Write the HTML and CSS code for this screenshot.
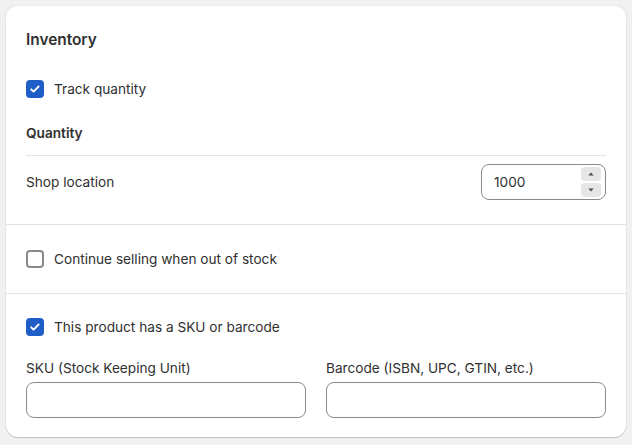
FILE: index.html
```html
<!DOCTYPE html>
<html>
<head>
<meta charset="utf-8">
<link rel="stylesheet" href="styles.css">
</head>
<body>
<div class="card">
  <section class="sec sec-top">
    <h2 class="title">Inventory</h2>
    <label class="check-row row-track">
      <span class="box checked"><svg viewBox="0 0 18 18" width="18" height="18"><path d="M5.2 9.3l2.4 2.4 5-5.2" fill="none" stroke="#fff" stroke-width="1.9" stroke-linecap="round" stroke-linejoin="round"/></svg></span>
      <span>Track quantity</span>
    </label>
    <h3 class="subtitle">Quantity</h3>
    <div class="divider"></div>
    <div class="qty-row">
      <span>Shop location</span>
      <div class="num-input">
        <span class="num-val">1000</span>
        <div class="spin">
          <span class="spin-btn"><svg viewBox="0 0 8 5" width="6" height="4"><path d="M4 0.5L7.5 4.5H0.5Z" fill="#4a4a4a"/></svg></span>
          <span class="spin-btn"><svg viewBox="0 0 8 5" width="6" height="4"><path d="M4 4.5L0.5 0.5H7.5Z" fill="#4a4a4a"/></svg></span>
        </div>
      </div>
    </div>
  </section>
  <section class="sec sec-mid">
    <label class="check-row">
      <span class="box"></span>
      <span>Continue selling when out of stock</span>
    </label>
  </section>
  <section class="sec sec-bot">
    <label class="check-row">
      <span class="box checked"><svg viewBox="0 0 18 18" width="18" height="18"><path d="M5.2 9.3l2.4 2.4 5-5.2" fill="none" stroke="#fff" stroke-width="1.9" stroke-linecap="round" stroke-linejoin="round"/></svg></span>
      <span>This product has a SKU or barcode</span>
    </label>
    <div class="fields">
      <div class="field">
        <div class="flabel">SKU (Stock Keeping Unit)</div>
        <div class="text-input"></div>
      </div>
      <div class="field">
        <div class="flabel">Barcode (ISBN, UPC, GTIN, etc.)</div>
        <div class="text-input"></div>
      </div>
    </div>
  </section>
</div>
</body>
</html>
```
FILE: styles.css
```css
* { box-sizing: border-box; }
html, body { margin: 0; padding: 0; }
body {
  background: #f1f1f1;
  padding: 6px;
  font-family: Inter, "Noto Sans", sans-serif;
  font-size: 13.65px;
  line-height: 20px;
  color: #303030;
}
.card {
  width: 620px;
  background: #fff;
  border-radius: 12px;
  box-shadow: 0 1px 0 rgba(26,26,26,0.07), 0 1px 1px rgba(0,0,0,0.12), 0 0 0 1px rgba(0,0,0,0.03);
  overflow: hidden;
}
.sec { padding: 0 20px; }
.sec + .sec { border-top: 1px solid #e3e3e3; }
.sec-top { padding-top: 24px; padding-bottom: 24px; }
.sec-mid { padding-top: 24px; padding-bottom: 24px; }
.sec-bot { padding-top: 23px; padding-bottom: 19px; }
.title {
  margin: 0;
  font-size: 15.4px;
  font-weight: 600;
  line-height: 20px;
}
.check-row {
  display: flex;
  align-items: center;
  gap: 10px;
  height: 20px;
}
.row-track { margin-top: 29px; }
.box {
  width: 18px;
  height: 18px;
  border: 2px solid #8a8a8a;
  border-radius: 4px;
  display: flex;
  align-items: center;
  justify-content: center;
  flex: none;
}
.box.checked {
  background: #1f5dc7;
  border: none;
}
.subtitle {
  margin: 24px 0 0;
  font-size: 13.65px;
  font-weight: 600;
  line-height: 20px;
}
.divider {
  height: 1px;
  background: #e3e3e3;
  margin-top: 12px;
}
.qty-row {
  margin-top: 8px;
  display: flex;
  align-items: center;
  justify-content: space-between;
}
.num-input {
  width: 125px;
  height: 36px;
  border: 1px solid #8a8a8a;
  border-radius: 8px;
  display: flex;
  align-items: center;
  justify-content: space-between;
  padding: 0 4px 0 12px;
}
.spin {
  display: flex;
  flex-direction: column;
  gap: 2px;
}
.spin-btn {
  width: 20px;
  height: 14px;
  background: #e6e6e6;
  border-radius: 4px;
  display: flex;
  align-items: center;
  justify-content: center;
}
.fields {
  margin-top: 21px;
  display: grid;
  grid-template-columns: 1fr 1fr;
  gap: 20px;
}
.flabel { line-height: 20px; }
.text-input {
  margin-top: 4px;
  height: 36px;
  border: 1px solid #8a8a8a;
  border-radius: 8px;
  background: #fff;
}
```
